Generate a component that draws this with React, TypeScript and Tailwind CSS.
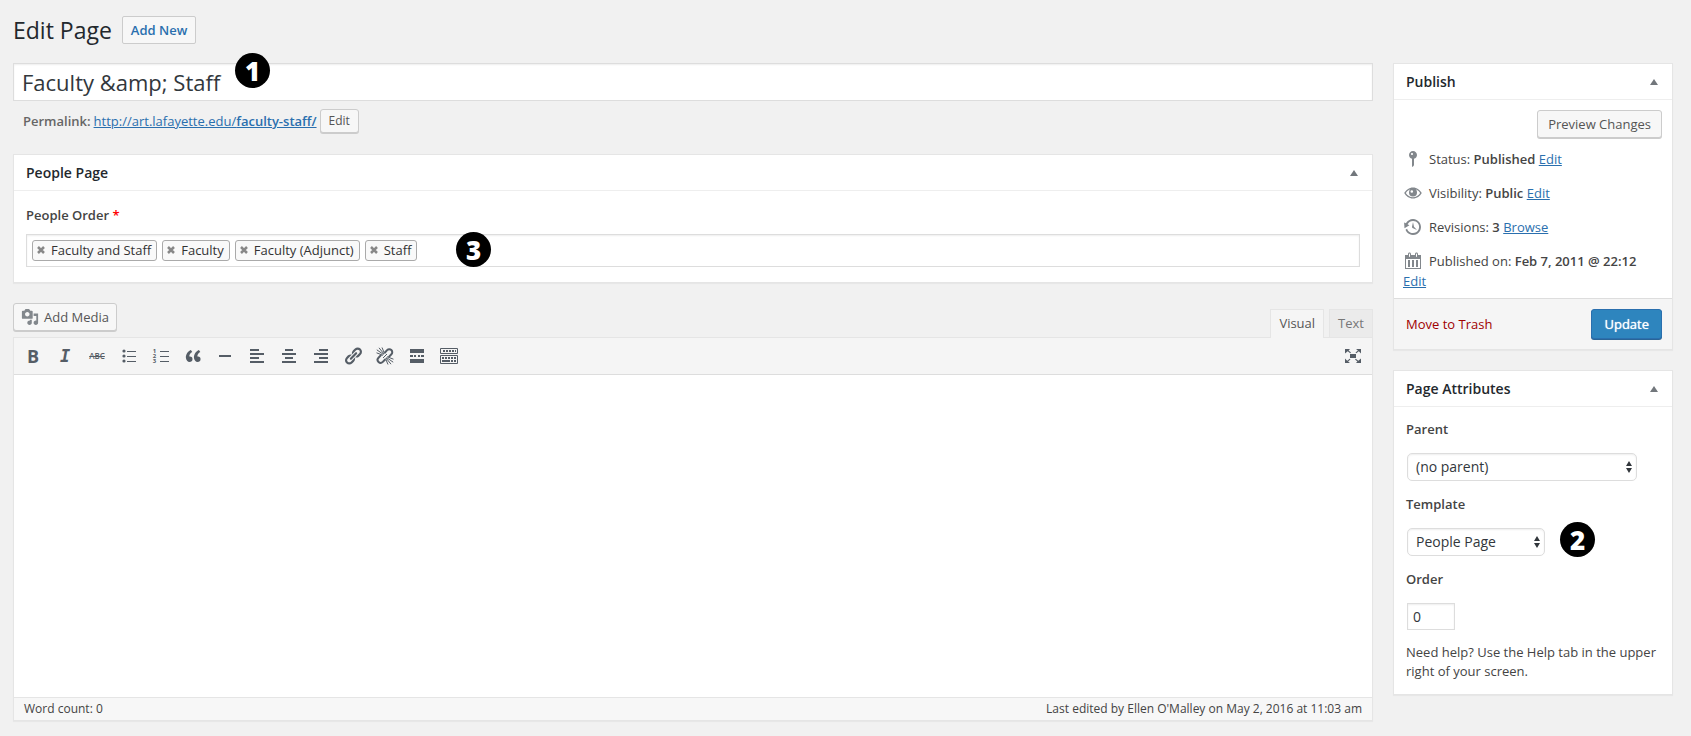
import type { ReactNode } from 'react';
import clsx from 'clsx';

const people = ['Faculty and Staff', 'Faculty', 'Faculty (Adjunct)', 'Staff'];

const paths = {
  media:
    'M13 11V4c0-.55-.45-1-1-1h-1.67L9 1H5L3.67 3H2c-.55 0-1 .45-1 1v7c0 .55.45 1 1 1h10c.55 0 1-.45 1-1zM7 4.5c1.38 0 2.5 1.12 2.5 2.5S8.38 9.5 7 9.5 4.5 8.38 4.5 7 5.62 4.5 7 4.5zM14 6h5v10.5c0 1.38-1.12 2.5-2.5 2.5S14 17.88 14 16.5s1.12-2.5 2.5-2.5c.17 0 .34.02.5.05V9h-3V6zm-4 8.05V13h2v3.5c0 1.38-1.12 2.5-2.5 2.5S7 17.88 7 16.5 8.12 14 9.5 14c.17 0 .34.02.5.05z',
  pin: 'M14 6c0 1.86-1.28 3.41-3 3.86V16c0 1-2 2-2 2V9.86c-1.72-.45-3-2-3-3.86 0-2.21 1.79-4 4-4s4 1.79 4 4zM8 5c0 .55.45 1 1 1s1-.45 1-1-.45-1-1-1-1 .45-1 1z',
  eye: 'M10 4.500C6 4.500 3 7 1.200 10c1.800 3 4.800 5.500 8.800 5.500s7-2.500 8.800-5.500C17 7 14 4.500 10 4.500zm0 9.800c-3 0-5.600-1.700-7.200-4.300C4.400 7.300 7 5.700 10 5.700s5.600 1.600 7.200 4.300c-1.600 2.600-4.200 4.300-7.200 4.300zM10 5.500a4 4 0 1 0 0 8a4 4 0 1 0 0-8zM8.800 7.200a1.300 1.300 0 1 1 0 2.600a1.300 1.300 0 1 1 0-2.600z',
  backup:
    'M13.65 2.88c3.93 2.01 5.48 6.84 3.47 10.77s-6.83 5.48-10.77 3.47c-1.87-.96-3.2-2.56-3.86-4.4l1.64-1.03c.45 1.57 1.52 2.95 3.08 3.76 3.01 1.54 6.69.35 8.23-2.66 1.55-3.01.36-6.69-2.65-8.24C9.78 3.01 6.1 4.2 4.56 7.21l1.88.97-4.95 3.08-.39-5.82 1.78.91C4.9 2.4 9.75.89 13.65 2.88zm-4.36 7.83C9.11 10.53 9 10.28 9 10c0-.07.03-.12.04-.19h-.01L10 5l.97 4.81L14 13l-4.5-2.12.02-.02c-.08-.04-.16-.09-.23-.15z',
  calendar:
    'M15 4h3v14H2V4h3V3c0-.83.67-1.5 1.5-1.5S8 2.17 8 3v1h4V3c0-.83.67-1.5 1.5-1.5S15 2.17 15 3v1zM6 3v2.5c0 .28.22.5.5.5s.5-.22.5-.5V3c0-.28-.22-.5-.5-.5S6 2.72 6 3zm7 0v2.5c0 .28.22.5.5.5s.5-.22.5-.5V3c0-.28-.22-.5-.5-.5s-.5.22-.5.5zm4 14V8H3v9h14zM7 16V9H5v7h2zm4 0V9H9v7h2zm4 0V9h-2v7h2z',
  quote:
    'M9.49 13.22c0-.74-.2-1.38-.61-1.9-.62-.78-1.83-.88-2.53-.72-.29-1.65 1.11-3.75 2.92-4.65L7.88 4c-2.73 1.3-5.42 4.28-4.96 8.05C3.21 14.43 4.59 16 6.54 16c.85 0 1.56-.25 2.12-.75s.83-1.18.83-2.03zm8.05 0c0-.74-.2-1.38-.61-1.9-.63-.78-1.83-.88-2.53-.72-.29-1.65 1.11-3.75 2.92-4.65L15.93 4c-2.73 1.3-5.41 4.28-4.95 8.05.29 2.38 1.66 3.95 3.61 3.95.85 0 1.56-.25 2.12-.75s.83-1.18.83-2.03z',
  link: 'M17.74 2.76c1.68 1.69 1.68 4.41 0 6.1l-1.53 1.52c-1.12 1.12-2.7 1.47-4.14 1.09l2.62-2.61.76-.77.76-.76c.84-.84.84-2.2 0-3.04-.84-.85-2.2-.85-3.04 0l-.77.76-3.38 3.38c-.37-1.44-.02-3.02 1.1-4.14l1.52-1.53c1.69-1.68 4.42-1.68 6.1 0zM8.59 13.43l5.34-5.34c.42-.42.42-1.1 0-1.52-.44-.43-1.13-.39-1.53 0l-5.33 5.34c-.42.42-.42 1.1 0 1.52.44.43 1.13.39 1.52 0zm-.76 2.29l4.14-4.15c.38 1.44.03 3.02-1.09 4.14l-1.52 1.53c-1.69 1.68-4.41 1.68-6.1 0-1.68-1.68-1.68-4.42 0-6.1l1.53-1.52c1.12-1.12 2.7-1.47 4.14-1.1l-4.14 4.15c-.85.84-.85 2.2 0 3.05.84.84 2.2.84 3.04 0z',
  hr: 'M4 9h12v2H4z',
  left: 'M3 3h9v2H3zM3 7h14v2H3zM3 11h9v2H3zM3 15h14v2H3z',
  center: 'M6 3h8v2H6zM3 7h14v2H3zM6 11h8v2H6zM3 15h14v2H3z',
  right: 'M8 3h9v2H8zM3 7h14v2H3zM8 11h9v2H8zM3 15h14v2H3z',
  more: 'M3 3h14v4H3zM3 9h3v2H3zM7 9h2v2H7zM11 9h2v2h-2zM14 9h3v2h-3zM3 13h14v4H3z',
  expand:
    'M2 3h5L5.600 4.400l2.400 2-.8.8-2.500-2L2 7.500zM18 3v4.500l-2.200-2.300-2.500 2-.8-.8 2.400-2L13 3zM2 17v-4.500l2.200 2.300 2.500-2 .8.8-2.400 2L7 17zM18 17h-5l1.400-1.400-2.400-2 .8-.8 2.500 2L18 12.500zM7 8h6v4H7z',
};

function Icon({ d, className }: { d: string; className?: string }) {
  return (
    <svg viewBox="0 0 20 20" className={clsx('shrink-0 fill-current', className ?? 'h-5 w-5')} aria-hidden="true">
      <path d={d} />
    </svg>
  );
}

function BulletListIcon() {
  return (
    <svg viewBox="0 0 20 20" className="h-5 w-5 fill-current" aria-hidden="true">
      <circle cx="5" cy="5" r="1.600" />
      <circle cx="5" cy="10" r="1.600" />
      <circle cx="5" cy="15" r="1.600" />
      <path d="M8 5h9v1H8zM8 10h9v1H8zM8 15h9v1H8z" />
    </svg>
  );
}

function NumberListIcon() {
  return (
    <span className="flex items-center gap-1" aria-hidden="true">
      <span className="flex flex-col text-[6px] leading-[5px] font-bold">
        <span>1</span>
        <span>2</span>
        <span>3</span>
      </span>
      <span className="flex w-[9px] flex-col gap-1">
        <span className="h-px bg-current" />
        <span className="h-px bg-current" />
        <span className="h-px bg-current" />
      </span>
    </span>
  );
}

function UnlinkIcon() {
  return (
    <svg viewBox="0 0 20 20" className="h-5 w-5 fill-none stroke-current" aria-hidden="true">
      <path
        d="M9.500 7l2.600-2.900a3 3 0 0 1 4.300 4.200l-2.700 2.800M10.400 13.200l-2.600 2.700a3 3 0 0 1-4.300-4.200l2.700-2.800"
        strokeWidth="2"
      />
      <path
        d="M8.500 8.500L1.800 3.800M9 8L4 1.800M9.500 7.500L7 1.500M8 9.300L1.500 6.800M11.500 11.500l6.700 4.700M11 12l5 6.200M10.500 12.500l2.500 6M12 10.700l6.500 2.500M8 12l4-4"
        strokeWidth="1"
      />
    </svg>
  );
}

function KeyboardIcon() {
  return (
    <svg viewBox="0 0 20 20" className="h-5 w-5 fill-current" aria-hidden="true">
      <path d="M1.500 2.500h17v5h-17zM1.500 9.500h17v8h-17z" fill="none" stroke="currentColor" />
      <path d="M4 4h2v2H4zM7 4h2v2H7zM10 4h2v2h-2zM13 4h2v2h-2zM16 4h1v2h-1z" />
      <path d="M3 11h2v2H3zM6 11h2v2H6zM9 11h2v2H9zM12 11h2v2h-2zM15 11h2v2h-2zM3 14h8v2H3zM12 14h2v2h-2zM15 14h2v2h-2z" />
    </svg>
  );
}

const tools: { label: string; icon: ReactNode }[] = [
  { label: 'Bold', icon: <span className="text-[18px] leading-5 font-bold">B</span> },
  {
    label: 'Italic',
    icon: <span className="font-['DejaVu_Sans_Mono',monospace] text-[17px] leading-5 font-bold italic">I</span>,
  },
  { label: 'Strikethrough', icon: <span className="text-[8px] font-semibold line-through">ABC</span> },
  { label: 'Bulleted list', icon: <BulletListIcon /> },
  { label: 'Numbered list', icon: <NumberListIcon /> },
  { label: 'Blockquote', icon: <Icon d={paths.quote} /> },
  { label: 'Horizontal line', icon: <Icon d={paths.hr} /> },
  { label: 'Align left', icon: <Icon d={paths.left} /> },
  { label: 'Align center', icon: <Icon d={paths.center} /> },
  { label: 'Align right', icon: <Icon d={paths.right} /> },
  { label: 'Insert link', icon: <Icon d={paths.link} /> },
  { label: 'Remove link', icon: <UnlinkIcon /> },
  { label: 'Read more', icon: <Icon d={paths.more} /> },
  { label: 'Toolbar toggle', icon: <KeyboardIcon /> },
];

function Step({ n, className }: { n: number; className: string }) {
  return (
    <span
      className={clsx(
        'absolute flex h-[35px] w-[35px] items-center justify-center rounded-full bg-black text-[26px] leading-none font-extrabold text-white',
        className
      )}
    >
      {n}
    </span>
  );
}

function Box({ title, children }: { title: string; children: ReactNode }) {
  return (
    <section className="border border-[#e5e5e5] bg-white shadow-[0_1px_1px_rgba(0,0,0,0.04)]">
      <div className="flex h-9 items-center justify-between border-b border-[#eee] pr-[14px] pl-3">
        <h2 className="text-sm font-semibold text-[#23282d]">{title}</h2>
        <button type="button" aria-label={`Toggle ${title}`}>
          <svg viewBox="0 0 8 6" className="h-[6px] w-2 fill-[#72777c]">
            <path d="M4 0l4 6H0z" />
          </svg>
        </button>
      </div>
      {children}
    </section>
  );
}

function Select({ id, value, className }: { id: string; value: string; className: string }) {
  return (
    <div className={clsx('relative', className)}>
      <select
        id={id}
        className="h-7 w-full appearance-none rounded-[5px] border border-[#ddd] bg-white pl-2 text-sm text-[#32373c] shadow-[inset_0_1px_2px_rgba(0,0,0,0.07)]"
      >
        <option>{value}</option>
      </select>
      <svg viewBox="0 0 6 12" className="pointer-events-none absolute top-2 right-[5px] h-3 w-[6px] fill-[#32373c]">
        <path d="M3 0l3 5H0zM0 7h6l-3 5z" />
      </svg>
    </div>
  );
}

function PublishRow({ icon, children }: { icon: string; children: ReactNode }) {
  return (
    <p className="py-[7px] pr-5 pl-[9px]">
      <Icon d={icon} className="mr-[6px] inline-block h-5 w-5 align-top text-[#82878c]" />
      {children}
    </p>
  );
}

const button = 'rounded-[3px] border border-[#ccc] bg-[#f7f7f7] text-[#555] shadow-[0_1px_0_#ccc]';
const link = 'text-[#2a6fae] underline';

export default function App() {
  return (
    <div className="min-h-screen bg-[#f1f1f1] pt-4 pr-[18px] pb-[15px] pl-[13px] font-['Open_Sans',sans-serif] text-[13px] leading-5 text-[#444]">
      <header className="mb-[19px] flex h-7 items-center gap-[10px]">
        <h1 className="text-[23px] leading-7 text-[#23282d]">Edit Page</h1>
        <a
          href="#new"
          className="rounded-xs border border-[#ccc] bg-[#f7f7f7] px-2 py-[3px] font-semibold text-[#2a6fae]"
        >
          Add New
        </a>
      </header>

      <div className="flex items-start gap-5">
        <main className="min-w-0 flex-1">
          <div className="relative">
            <input
              aria-label="Page title"
              defaultValue="Faculty &amp;amp; Staff"
              className="block h-[38px] w-full border border-[#ddd] bg-white px-2 text-[22px] text-[#32373c] shadow-[inset_0_1px_2px_rgba(0,0,0,0.07)]"
            />
            <Step n={1} className="-top-[10px] left-[222px]" />
          </div>

          <div className="mt-2 flex h-6 items-center gap-[3px] pl-[10px]">
            <strong className="font-semibold text-[#666]">Permalink:</strong>
            <a href="#permalink" className={link}>
              http://art.lafayette.edu/<b className="font-semibold">faculty-staff/</b>
            </a>
            <button type="button" className={clsx(button, 'h-6 px-2 text-xs')}>
              Edit
            </button>
          </div>

          <div className="mt-[21px]">
            <Box title="People Page">
              <div className="px-3 pt-[14px] pb-[15px]">
                <label htmlFor="people" className="block font-semibold">
                  People Order <span className="text-[#f00]">*</span>
                </label>
                <div className="relative mt-[9px] flex h-[33px] items-center gap-[5px] border border-[#ddd] px-[5px] shadow-[inset_0_1px_2px_rgba(0,0,0,0.07)]">
                  {people.map((name) => (
                    <span
                      key={name}
                      className="flex h-[21px] items-center gap-[6px] rounded-[3px] border border-[#aaa] bg-[#f9f9f9] pr-[5px] pb-px pl-1 text-[#333]"
                    >
                      <button type="button" aria-label={`Remove ${name}`}>
                        <svg viewBox="0 0 8 8" className="h-2 w-2 stroke-[#888]">
                          <path d="M1 1l6 6M7 1L1 7" strokeWidth="2.500" />
                        </svg>
                      </button>
                      {name}
                    </span>
                  ))}
                  <input id="people" className="h-6 min-w-0 flex-1 outline-none" />
                  <Step n={3} className="-top-[3px] left-[429px]" />
                </div>
              </div>
            </Box>
          </div>

          <div className="mt-5 flex h-[34px] justify-between">
            <button type="button" className={clsx(button, 'flex h-[28px] items-center gap-[5px] px-[7px]')}>
              <Icon d={paths.media} className="h-[18px] w-[18px] text-[#82878c]" />
              Add Media
            </button>
            <div className="flex items-end gap-[5px]">
              <button
                type="button"
                className="relative z-10 -mb-px h-[29px] border border-b-0 border-[#e5e5e5] bg-[#f5f5f5] px-2 pb-[2px] text-[#555]"
              >
                Visual
              </button>
              <button
                type="button"
                className="h-[28px] border border-b-0 border-[#e5e5e5] bg-[#ebebeb] px-2 pb-px text-[#777]"
              >
                Text
              </button>
            </div>
          </div>

          <section className="border border-[#e5e5e5] bg-white shadow-[0_1px_1px_rgba(0,0,0,0.04)]">
            <div className="flex h-[37px] items-center justify-between border-b border-[#ddd] bg-[#f5f5f5] px-[3px] text-[#555d66]">
              <div className="flex">
                {tools.map((tool) => (
                  <button
                    key={tool.label}
                    type="button"
                    aria-label={tool.label}
                    className="flex h-7 w-8 items-center justify-center"
                  >
                    {tool.icon}
                  </button>
                ))}
              </div>
              <button type="button" aria-label="Fullscreen" className="flex h-7 w-8 items-center justify-center">
                <Icon d={paths.expand} />
              </button>
            </div>
            <textarea aria-label="Page content" className="block h-[322px] w-full resize-none p-3 outline-none" />
            <div className="flex justify-between border-t border-[#e5e5e5] bg-[#f7f7f7] px-[10px] py-px text-xs leading-5">
              <span>Word count: 0</span>
              <span>Last edited by Ellen O'Malley on May 2, 2016 at 11:03 am</span>
            </div>
          </section>
        </main>

        <aside className="flex w-[280px] shrink-0 flex-col gap-5">
          <Box title="Publish">
            <div className="flex justify-end px-[10px] pt-[10px] pb-1">
              <button type="button" className={clsx(button, 'h-7 px-[10px]')}>
                Preview Changes
              </button>
            </div>
            <PublishRow icon={paths.pin}>
              Status: <b className="font-semibold">Published</b>{' '}
              <a href="#status" className={link}>
                Edit
              </a>
            </PublishRow>
            <PublishRow icon={paths.eye}>
              Visibility: <b className="font-semibold">Public</b>{' '}
              <a href="#visibility" className={link}>
                Edit
              </a>
            </PublishRow>
            <PublishRow icon={paths.backup}>
              Revisions: <b className="font-semibold">3</b>{' '}
              <a href="#revisions" className={link}>
                Browse
              </a>
            </PublishRow>
            <PublishRow icon={paths.calendar}>
              Published on: <b className="font-semibold">Feb 7, 2011 @ 22:12</b>{' '}
              <a href="#date" className={link}>
                Edit
              </a>
            </PublishRow>
            <div className="flex items-center justify-between border-t border-[#ddd] bg-[#f5f5f5] py-[10px] pr-[10px] pl-3">
              <a href="#trash" className="text-[#a00000]">
                Move to Trash
              </a>
              <button
                type="button"
                className="h-[30px] rounded-[3px] border border-[#2a6fae] bg-[#2e85be] px-3 text-white shadow-[0_1px_0_#2a6496] text-shadow-[0_0_1px_#fff]"
              >
                Update
              </button>
            </div>
          </Box>

          <Box title="Page Attributes">
            <div className="px-3 pt-3 pb-[13px]">
              <label htmlFor="parent" className="block font-semibold">
                Parent
              </label>
              <Select id="parent" value="(no parent)" className="mt-[14px] ml-px w-[230px]" />
              <label htmlFor="template" className="mt-[13px] block font-semibold">
                Template
              </label>
              <div className="relative mt-[14px]">
                <Select id="template" value="People Page" className="ml-px w-[138px]" />
                <Step n={2} className="-top-[6px] left-[154px]" />
              </div>
              <label htmlFor="order" className="mt-[13px] block font-semibold">
                Order
              </label>
              <input
                id="order"
                defaultValue="0"
                className="mt-[14px] ml-px block h-[27px] w-12 border border-[#ddd] px-[5px] text-sm text-[#32373c] shadow-[inset_0_1px_2px_rgba(0,0,0,0.07)]"
              />
              <p className="mt-[13px] leading-[19px]">
                Need help? Use the Help tab in the upper right of your screen.
              </p>
            </div>
          </Box>
        </aside>
      </div>
    </div>
  );
}
